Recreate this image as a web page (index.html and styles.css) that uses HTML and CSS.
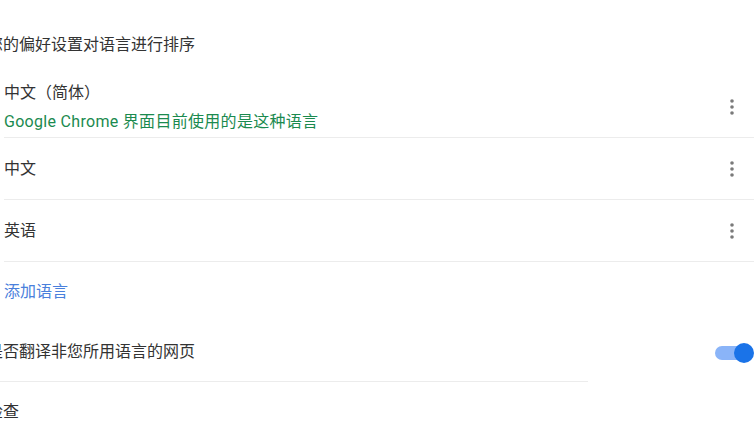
FILE: index.html
```html
<!DOCTYPE html>
<html lang="zh-CN">
<head>
    <meta charset="UTF-8">
    <meta name="viewport" content="width=device-width, initial-scale=1.0">
    <title>语言设置</title>
    <link rel="stylesheet" href="styles.css">
</head>
<body>
    <div class="section">
        <div class="heading">根据您的偏好设置对语言进行排序</div>

        <div class="lang-list">
            <div class="lang-row lang-row-two">
                <div class="lang-text">
                    <div class="lang-name">中文（简体）</div>
                    <div class="lang-note">Google Chrome 界面目前使用的是这种语言</div>
                </div>
                <span class="more-btn">
                    <svg width="20" height="20" viewBox="0 0 20 20"><circle cx="10" cy="4" r="1.8"/><circle cx="10" cy="10" r="1.8"/><circle cx="10" cy="16" r="1.8"/></svg>
                </span>
            </div>
            <div class="lang-row">
                <div class="lang-name">中文</div>
                <span class="more-btn">
                    <svg width="20" height="20" viewBox="0 0 20 20"><circle cx="10" cy="4" r="1.8"/><circle cx="10" cy="10" r="1.8"/><circle cx="10" cy="16" r="1.8"/></svg>
                </span>
            </div>
            <div class="lang-row">
                <div class="lang-name">英语</div>
                <span class="more-btn">
                    <svg width="20" height="20" viewBox="0 0 20 20"><circle cx="10" cy="4" r="1.8"/><circle cx="10" cy="10" r="1.8"/><circle cx="10" cy="16" r="1.8"/></svg>
                </span>
            </div>
            <div class="add-row">
                <a class="add-link">添加语言</a>
            </div>
        </div>

        <div class="setting-row translate-row">
            <span>询问是否翻译非您所用语言的网页</span>
            <span class="toggle">
                <span class="toggle-track"></span>
                <span class="toggle-knob"></span>
            </span>
        </div>

        <div class="setting-row spell-row">
            <span>拼写检查</span>
        </div>
    </div>
</body>
</html>
```

FILE: styles.css
```css
body {
    margin: 0;
    background: #fff;
    font-family: Roboto, "Noto Sans CJK SC", sans-serif;
    font-size: 16px;
    color: #333;
    overflow: hidden;
    text-spacing-trim: space-all;
}

.section {
    margin-left: -45px;
}

.heading {
    line-height: 20px;
    padding-top: 35px;
    padding-bottom: 22px;
}

.lang-list {
    padding-left: 49px;
}

.lang-row {
    display: flex;
    align-items: center;
    justify-content: space-between;
    box-sizing: border-box;
    height: 62px;
    padding-right: 12px;
    border-bottom: 1px solid #ececec;
}

.lang-row-two {
    height: 61px;
}

.lang-name {
    line-height: 20px;
}

.lang-note {
    color: #1b8a4f;
    line-height: 20px;
    margin-top: 9px;
    letter-spacing: 0.3px;
}

.more-btn {
    display: flex;
}

.more-btn svg {
    fill: #7a7a7a;
}

.add-row {
    display: flex;
    align-items: center;
    height: 59px;
}

.add-link {
    color: #4a80dc;
    line-height: 20px;
}

.setting-row {
    display: flex;
    align-items: center;
    justify-content: space-between;
    height: 60px;
    line-height: 20px;
}

.translate-row {
    height: 61px;
    background: linear-gradient(#ececec, #ececec) no-repeat left bottom / 633px 1px;
}

.toggle {
    position: relative;
    display: block;
    width: 39px;
    height: 20px;
    margin-top: 3px;
}

.toggle-track {
    position: absolute;
    left: 0;
    top: 3px;
    width: 34px;
    height: 14px;
    border-radius: 7px;
    background: #8ab4f8;
}

.toggle-knob {
    position: absolute;
    right: 0;
    top: 0;
    width: 20px;
    height: 20px;
    border-radius: 50%;
    background: #1a73e8;
}
```
